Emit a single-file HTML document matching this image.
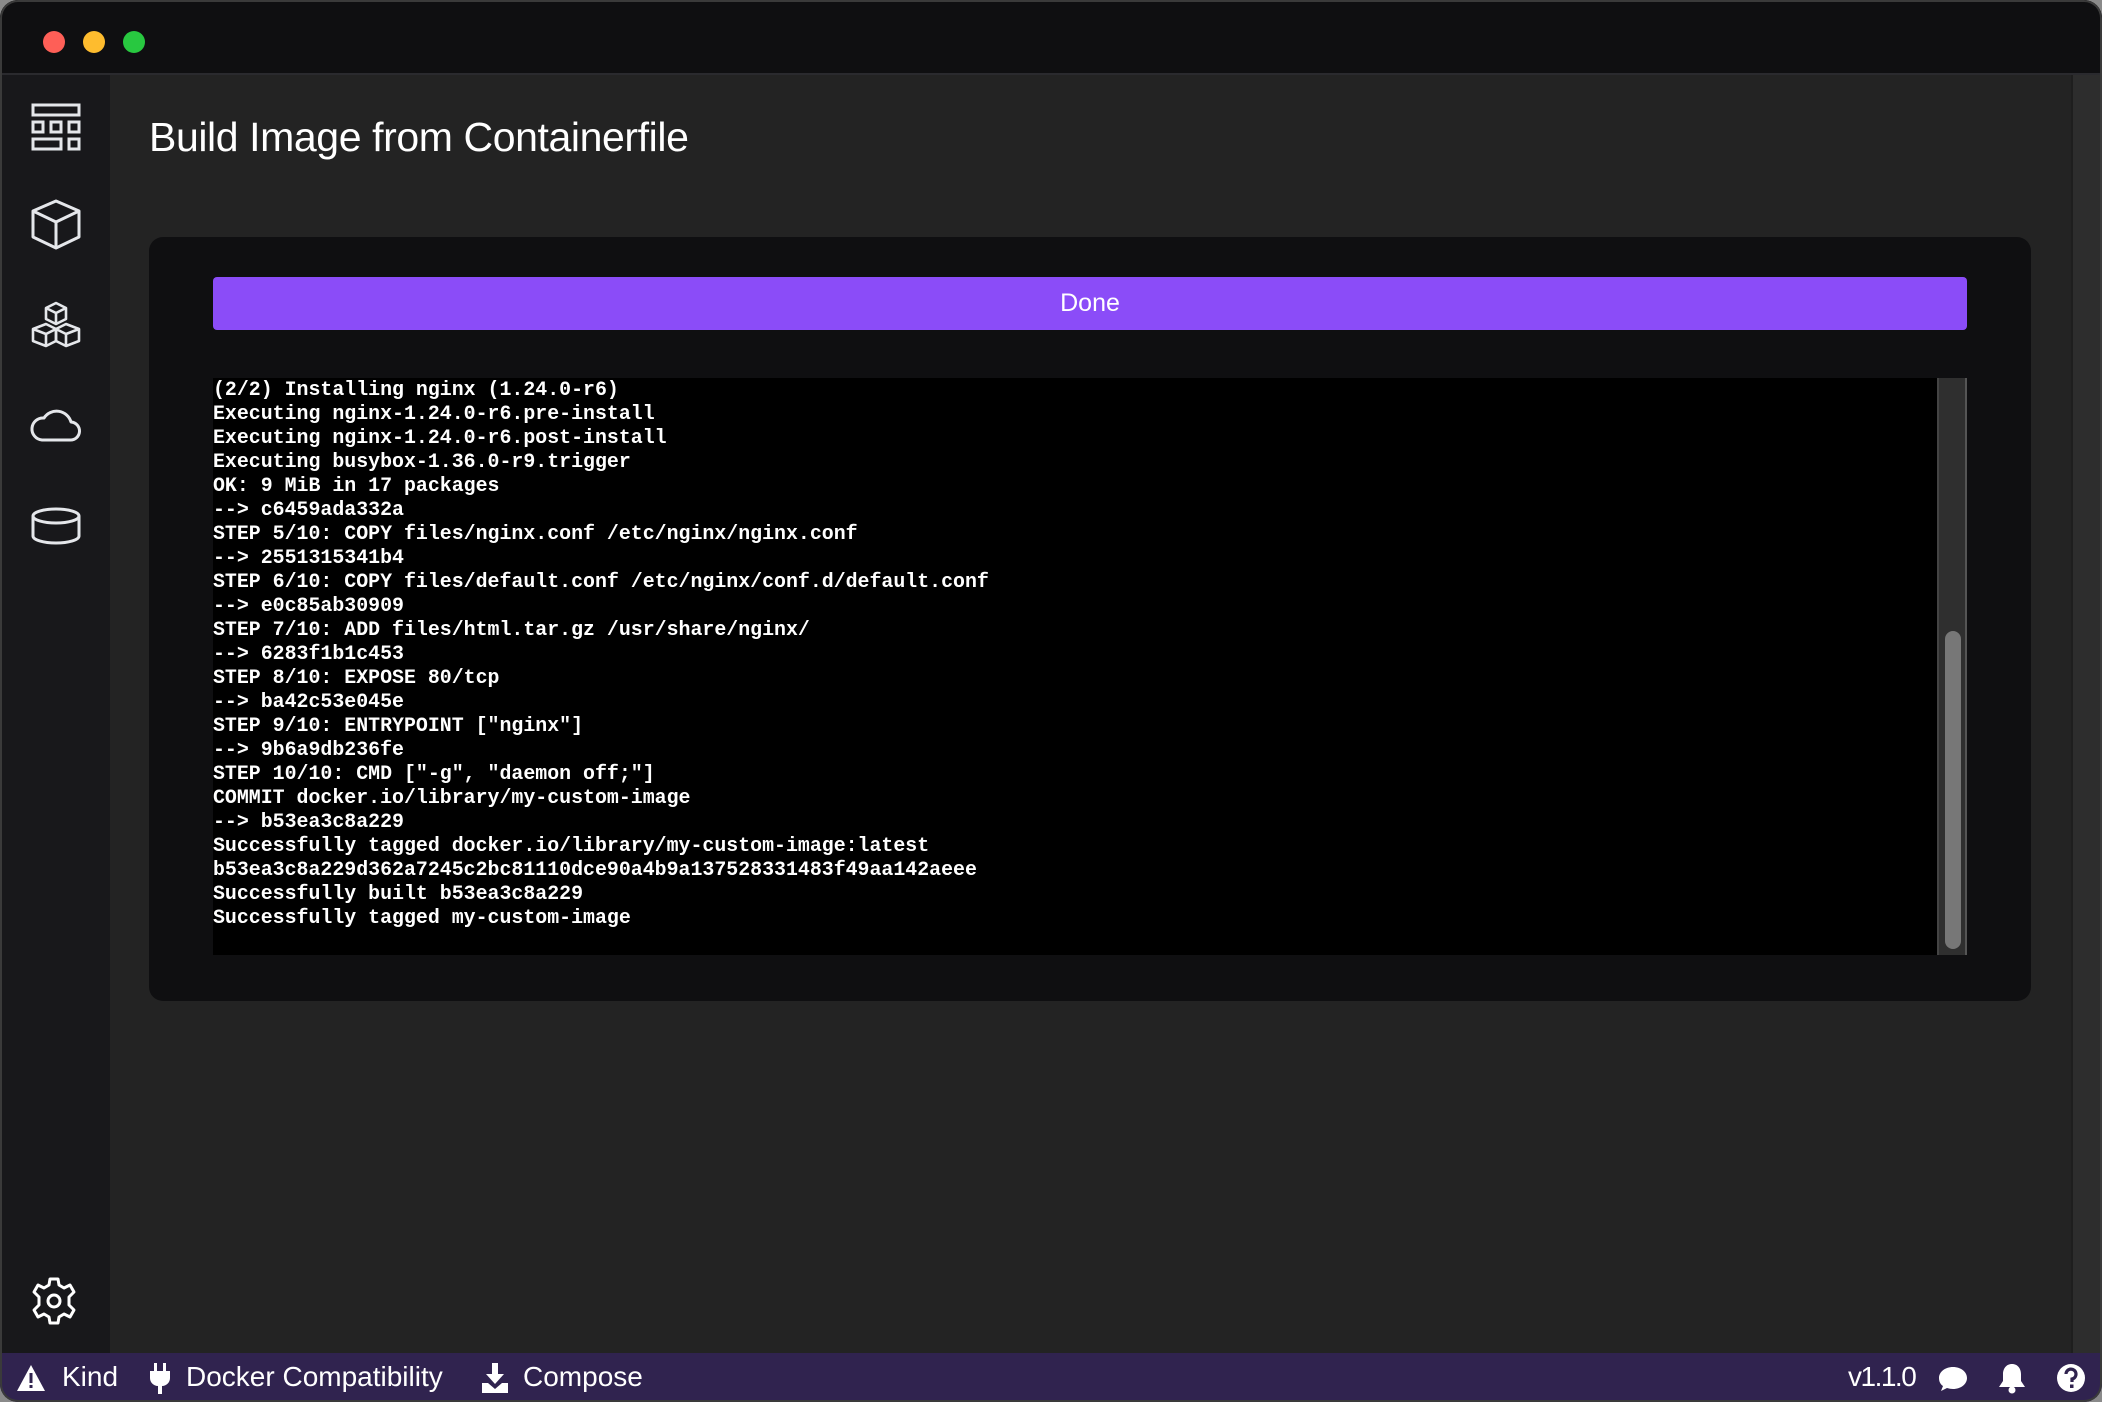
<!DOCTYPE html>
<html><head><meta charset="utf-8"><style>
*{margin:0;padding:0;box-sizing:border-box}
html,body{width:2102px;height:1402px;overflow:hidden;background:#8a8a8a}
.win{position:absolute;left:0;top:0;width:2102px;height:1402px;border-radius:18px;overflow:hidden;background:#222}
.frame{position:absolute;left:0;top:0;width:2102px;height:1402px;border-radius:18px;box-shadow:inset 0 0 0 2px #3a3a3a;pointer-events:none}
.tb{position:absolute;left:0;top:0;width:2102px;height:75px;background:#0f0f11;border-bottom:2px solid #2a2a2e}
.dot{position:absolute;top:31px;width:22px;height:22px;border-radius:50%}
.side{position:absolute;left:0;top:75px;width:110px;height:1279px;background:#18181b}
.main{position:absolute;left:110px;top:75px;width:1961px;height:1279px;background:#232323}
.vs{position:absolute;left:2071px;top:75px;width:31px;height:1279px;background:#2d2d2d;border-left:2px solid #1e1e1e}
h1{position:absolute;left:149px;top:114px;font:400 41px "Liberation Sans",sans-serif;color:#fff;letter-spacing:-0.4px}
.panel{position:absolute;left:149px;top:237px;width:1882px;height:764px;background:#0f0f11;border-radius:14px}
.btn{position:absolute;left:213px;top:277px;width:1754px;height:53px;background:#8b4cf8;border-radius:4px;color:#fff;font:400 25px "Liberation Sans",sans-serif;text-align:center;line-height:53px}
.term{position:absolute;left:213px;top:378px;width:1724px;height:577px;background:#000;overflow:hidden}
.term pre{position:absolute;left:0;top:0;font:700 19.9px/24px "Liberation Mono",monospace;color:#fff;padding-top:0}
.trk{position:absolute;left:1937px;top:378px;width:30px;height:577px;background:#2f2f2f;border-left:2px solid #444;border-right:2px solid #555}
.thumb{position:absolute;left:1945px;top:631px;width:16px;height:318px;background:#777;border-radius:8px}
.sb{position:absolute;left:0;top:1353px;width:2102px;height:49px;background:#30234f;color:#fff;font:400 28px "Liberation Sans",sans-serif}
.sb span{position:absolute;top:8px}
svg{position:absolute}
</style></head><body><div class="win">
<div class="tb"><div class="dot" style="left:43px;background:#fe5f57"></div><div class="dot" style="left:83px;background:#febc2e"></div><div class="dot" style="left:123px;background:#28c840"></div></div>
<div class="side">
<svg style="left:30px;top:25px" width="52" height="52" viewBox="0 0 52 52" fill="none" stroke="#e5e7eb" stroke-width="3"><rect x="3" y="5" width="46" height="10"/><rect x="3" y="22" width="10" height="10"/><rect x="21" y="22" width="10" height="10"/><rect x="39" y="22" width="10" height="10"/><rect x="3" y="39" width="28" height="10"/><rect x="39" y="39" width="10" height="10"/></svg>
<svg style="left:30px;top:123px" width="52" height="52" viewBox="0 0 52 52" fill="none" stroke="#e5e7eb" stroke-width="3" stroke-linejoin="round"><path d="M26 3L49 13V39L26 50L3 39V13Z M3 13L26 24L49 13 M26 24V50"/></svg>
<svg style="left:30px;top:224px" width="52" height="52" viewBox="0 0 52 52" fill="none" stroke="#e5e7eb" stroke-width="2.6" stroke-linejoin="round"><path d="M26 4L36 9V20L26 25L16 20V9Z M16 9L26 14L36 9 M26 14V25"/><path d="M16 25L26 30V42L16 47L3 42V30Z M3 30L16 35L26 30 M16 35V47"/><path d="M36 25L49 30V42L36 47L26 42V30Z M26 30L36 35L49 30 M36 35V47"/></svg>
<svg style="left:30px;top:323px" width="52" height="52" viewBox="0 0 52 52" fill="none" stroke="#e5e7eb" stroke-width="3" stroke-linejoin="round"><path d="M12 42H40A9 9 0 0 0 41 24A15 15 0 0 0 14 20A11 11 0 0 0 12 42Z"/></svg>
<svg style="left:30px;top:425px" width="52" height="52" viewBox="0 0 52 52" fill="none" stroke="#e5e7eb" stroke-width="3"><ellipse cx="26" cy="16" rx="23" ry="7"/><path d="M3 16V36A23 7 0 0 0 49 36V16"/></svg>
<svg style="left:30px;top:1201px" width="48" height="50" viewBox="0 0 48 50" fill="none" stroke="#fff" stroke-width="3" stroke-linejoin="round"><path d="M20 3H28L29 9L34 12L40 9L44 16L39 21V29L44 34L40 41L34 38L29 41L28 47H20L19 41L14 38L8 41L4 34L9 29V21L4 16L8 9L14 12L19 9Z"/><circle cx="24" cy="25" r="6"/></svg>
</div>
<div class="main"></div>
<div class="vs"></div>
<h1>Build Image from Containerfile</h1>
<div class="panel"></div>
<div class="btn">Done</div>
<div class="term"><pre>(2/2) Installing nginx (1.24.0-r6)
Executing nginx-1.24.0-r6.pre-install
Executing nginx-1.24.0-r6.post-install
Executing busybox-1.36.0-r9.trigger
OK: 9 MiB in 17 packages
--&gt; c6459ada332a
STEP 5/10: COPY files/nginx.conf /etc/nginx/nginx.conf
--&gt; 2551315341b4
STEP 6/10: COPY files/default.conf /etc/nginx/conf.d/default.conf
--&gt; e0c85ab30909
STEP 7/10: ADD files/html.tar.gz /usr/share/nginx/
--&gt; 6283f1b1c453
STEP 8/10: EXPOSE 80/tcp
--&gt; ba42c53e045e
STEP 9/10: ENTRYPOINT ["nginx"]
--&gt; 9b6a9db236fe
STEP 10/10: CMD ["-g", "daemon off;"]
COMMIT docker.io/library/my-custom-image
--&gt; b53ea3c8a229
Successfully tagged docker.io/library/my-custom-image:latest
b53ea3c8a229d362a7245c2bc81110dce90a4b9a137528331483f49aa142aeee
Successfully built b53ea3c8a229
Successfully tagged my-custom-image</pre></div>
<div class="trk"></div><div class="thumb"></div>
<div class="sb">
<svg style="left:16px;top:11px" width="30" height="28" viewBox="0 0 30 28"><path d="M15 1L29 27H1Z" fill="#fff"/><rect x="13.5" y="9" width="3" height="10" fill="#30234f"/><rect x="13.5" y="21" width="3" height="3" fill="#30234f"/></svg>
<span style="left:62px">Kind</span>
<svg style="left:148px;top:9px" width="24" height="34" viewBox="0 0 24 34"><rect x="6" y="1" width="3" height="8" fill="#fff"/><rect x="15" y="1" width="3" height="8" fill="#fff"/><path d="M2 9H22V16A8 8 0 0 1 14 24V32H10V24A8 8 0 0 1 2 16Z" fill="#fff"/></svg>
<span style="left:186px">Docker Compatibility</span>
<svg style="left:480px;top:9px" width="30" height="32" viewBox="0 0 30 32"><path d="M12 1H18V12H24L15 22L6 12H12Z" fill="#fff"/><path d="M2 21H8L15 27L22 21H28V31H2Z" fill="#fff"/></svg>
<span style="left:523px">Compose</span>
<span style="left:1848px;letter-spacing:-1.5px">v1.1.0</span>
<svg style="left:1938px;top:12px" width="30" height="28" viewBox="0 0 30 28"><path d="M15 2C23 2 29 7 29 13C29 19 23 24 15 24C13 24 11 23.5 9 23L3 26L5 21C2 19 1 16 1 13C1 7 7 2 15 2Z" fill="#fff"/></svg>
<svg style="left:1998px;top:9px" width="28" height="32" viewBox="0 0 28 32"><path d="M14 2C20 2 23 7 23 12V19L27 25H1L5 19V12C5 7 8 2 14 2Z" fill="#fff"/><circle cx="14" cy="28" r="3.5" fill="#fff"/></svg>
<svg style="left:2056px;top:10px" width="30" height="30" viewBox="0 0 30 30"><circle cx="15" cy="15" r="14" fill="#fff"/><path d="M10 11A5 5 0 1 1 16 16V19" fill="none" stroke="#30234f" stroke-width="3.2"/><rect x="14" y="21.5" width="3.5" height="3.5" fill="#30234f"/></svg>
</div>
<div class="frame"></div>
</div></body></html>
